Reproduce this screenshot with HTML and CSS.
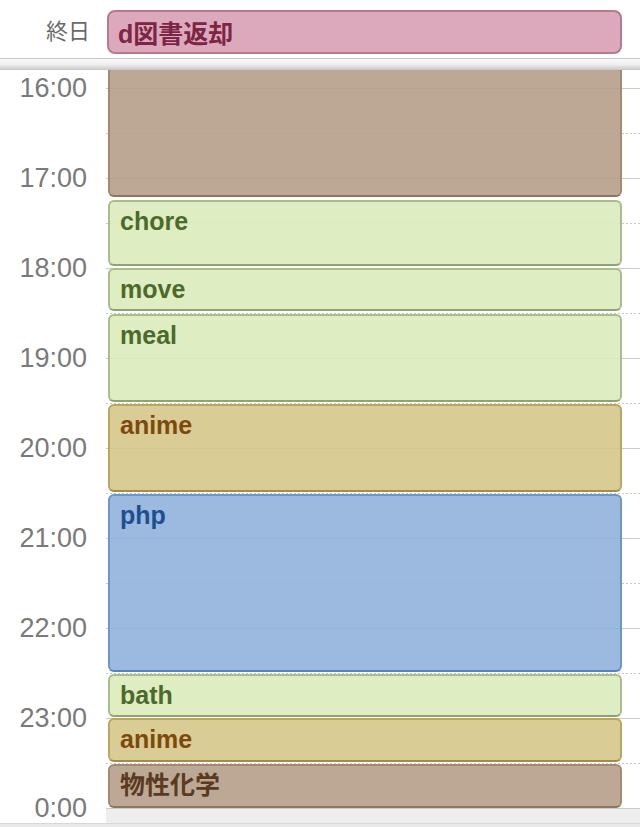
FILE: index.html
```html
<!DOCTYPE html>
<html lang="ja">
<head>
<meta charset="utf-8">
<title>Day</title>
<link rel="stylesheet" href="styles.css">
</head>
<body>
<div class="page">
  <header class="header">
    <div class="allday-label">終日</div>
    <div class="allday-event">d図書返却</div>
  </header>
  <div class="separator"></div>
  <main class="timeline">
    <div class="lead"></div>
    <div class="hour"><span class="label">16:00</span><div class="slot"></div></div>
    <div class="hour"><span class="label">17:00</span><div class="slot"></div></div>
    <div class="hour"><span class="label">18:00</span><div class="slot"></div></div>
    <div class="hour"><span class="label">19:00</span><div class="slot"></div></div>
    <div class="hour"><span class="label">20:00</span><div class="slot"></div></div>
    <div class="hour"><span class="label">21:00</span><div class="slot"></div></div>
    <div class="hour"><span class="label">22:00</span><div class="slot"></div></div>
    <div class="hour"><span class="label">23:00</span><div class="slot"></div></div>
    <div class="hour end"><span class="label">0:00</span><div class="slot"></div></div>
    <div class="bottom-strip"></div>

    <div class="events">
      <div class="event brown" style="top:-30px;height:157px"></div>
      <div class="event green" style="top:130px;height:66px">chore</div>
      <div class="event green" style="top:198px;height:43px">move</div>
      <div class="event green" style="top:244px;height:88px">meal</div>
      <div class="event gold" style="top:334px;height:88px">anime</div>
      <div class="event blue" style="top:424px;height:178px">php</div>
      <div class="event green" style="top:604px;height:43px">bath</div>
      <div class="event gold" style="top:648px;height:44px">anime</div>
      <div class="event brown" style="top:694px;height:44px">物性化学</div>
    </div>
  </main>
</div>
</body>
</html>
```

FILE: styles.css
```css
html, body {
  margin: 0;
  padding: 0;
  background: #ffffff;
}

.page {
  width: 640px;
  height: 827px;
  overflow: hidden;
  display: flex;
  flex-direction: column;
  font-family: "Liberation Sans", "Noto Sans CJK JP", sans-serif;
}

.header {
  height: 58px;
  box-sizing: border-box;
  padding: 10px 18px 4px 0;
  display: flex;
  align-items: stretch;
}

.allday-label {
  width: 107px;
  box-sizing: border-box;
  padding-right: 17px;
  text-align: right;
  font-size: 22px;
  line-height: 44px;
  color: #6a6a6a;
}

.allday-event {
  flex: 1;
  box-sizing: border-box;
  border: 2px solid #b9788f;
  border-radius: 8px;
  background: #dca9bc;
  color: #7c2545;
  font-weight: bold;
  font-size: 25px;
  display: flex;
  align-items: center;
  padding-left: 9px;
}

.separator {
  height: 11px;
  border-top: 1px solid #c4c4c4;
  background: linear-gradient(#fbfbfb, #ececec 55%, #c6c6c6);
}

.timeline {
  position: relative;
  flex: 1;
  overflow: hidden;
}

.lead {
  height: 18px;
}

.hour {
  display: flex;
  height: 90px;
}

.label {
  width: 106px;
  box-sizing: border-box;
  padding-right: 19px;
  text-align: right;
  font-size: 27px;
  line-height: 32px;
  height: 32px;
  margin-top: -16px;
  color: #7a7a7a;
}

.slot {
  flex: 1;
  border-top: 1px solid #cbcbcb;
  position: relative;
}

.slot::after {
  content: "";
  display: block;
  margin-top: 44px;
  height: 1px;
  background-image: repeating-linear-gradient(90deg, #c9c9c9 0 2px, transparent 2px 4px);
}

.hour.end {
  height: 15px;
}

.hour.end .slot {
  background: #eeeeee;
}

.hour.end .slot::after {
  display: none;
}

.bottom-strip {
  height: 4px;
  border-top: 1px solid #d8d8d8;
  background: #e9e9e9;
}

.events {
  position: absolute;
  top: 0;
  bottom: 0;
  left: 108px;
  right: 18px;
}

.event {
  position: absolute;
  left: 0;
  right: 0;
  box-sizing: border-box;
  border: 2px solid;
  border-radius: 6px;
  padding: 5px 10px 0;
  font-size: 25px;
  line-height: 28px;
  font-weight: bold;
  overflow: hidden;
}

.green {
  background: rgba(218, 235, 187, 0.9);
  border-color: #a8bd89;
  border-bottom-color: #8fa36f;
  color: #4b6a2b;
}

.gold {
  background: rgba(213, 199, 138, 0.9);
  border-color: #bba560;
  border-bottom-color: #a48c48;
  color: #7d4a0c;
}

.blue {
  background: rgba(145, 177, 221, 0.9);
  border-color: #6d96ca;
  border-bottom-color: #5a83b8;
  color: #1e4f91;
}

.brown {
  background: rgba(181, 158, 137, 0.9);
  border-color: #a58973;
  border-bottom-color: #90745f;
  color: #5b3a22;
}
```
